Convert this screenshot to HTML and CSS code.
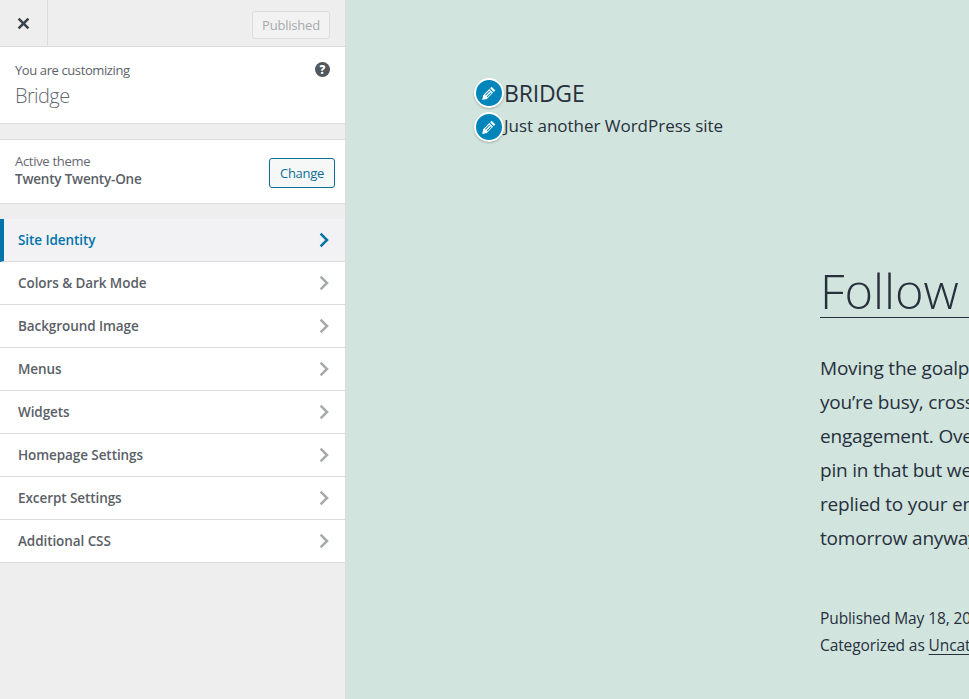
FILE: index.html
```html
<!DOCTYPE html>
<html lang="en">
<head>
<meta charset="utf-8">
<title>Customize: Bridge</title>
<link rel="stylesheet" href="styles.css">
</head>
<body>
<div class="app">
  <aside class="sidebar">
    <header class="topbar">
      <div class="close">
        <svg width="13" height="13" viewBox="0 0 13 13"><path d="M1.6 1.6l9.8 9.8M11.4 1.6l-9.8 9.8" stroke="#3c434a" stroke-width="2.6" fill="none"/></svg>
      </div>
      <div class="published">Published</div>
    </header>
    <section class="info">
      <div>
        <div class="info-label">You are customizing</div>
        <div class="info-title">Bridge</div>
      </div>
      <svg class="help" width="15" height="15" viewBox="0 0 15 15"><circle cx="7.5" cy="7.5" r="7.5" fill="#50575e"/><text x="7.5" y="11.6" text-anchor="middle" class="help-mark">?</text></svg>
    </section>
    <section class="theme">
      <div>
        <div class="theme-label">Active theme</div>
        <div class="theme-name">Twenty Twenty-One</div>
      </div>
      <div class="change">Change</div>
    </section>
    <nav class="menu">
      <div class="item active">Site Identity<svg class="chev" width="10" height="16" viewBox="0 0 10 16"><path d="M1.6 1.6L8 8l-6.4 6.4" fill="none" stroke-width="2.5"/></svg></div>
      <div class="item">Colors &amp; Dark Mode<svg class="chev" width="10" height="16" viewBox="0 0 10 16"><path d="M1.6 1.6L8 8l-6.4 6.4" fill="none" stroke-width="2.5"/></svg></div>
      <div class="item">Background Image<svg class="chev" width="10" height="16" viewBox="0 0 10 16"><path d="M1.6 1.6L8 8l-6.4 6.4" fill="none" stroke-width="2.5"/></svg></div>
      <div class="item">Menus<svg class="chev" width="10" height="16" viewBox="0 0 10 16"><path d="M1.6 1.6L8 8l-6.4 6.4" fill="none" stroke-width="2.5"/></svg></div>
      <div class="item">Widgets<svg class="chev" width="10" height="16" viewBox="0 0 10 16"><path d="M1.6 1.6L8 8l-6.4 6.4" fill="none" stroke-width="2.5"/></svg></div>
      <div class="item">Homepage Settings<svg class="chev" width="10" height="16" viewBox="0 0 10 16"><path d="M1.6 1.6L8 8l-6.4 6.4" fill="none" stroke-width="2.5"/></svg></div>
      <div class="item">Excerpt Settings<svg class="chev" width="10" height="16" viewBox="0 0 10 16"><path d="M1.6 1.6L8 8l-6.4 6.4" fill="none" stroke-width="2.5"/></svg></div>
      <div class="item">Additional CSS<svg class="chev" width="10" height="16" viewBox="0 0 10 16"><path d="M1.6 1.6L8 8l-6.4 6.4" fill="none" stroke-width="2.5"/></svg></div>
    </nav>
  </aside>
  <main class="preview">
    <div class="branding">
      <div class="site-row">
        <span class="pencil"><svg width="16" height="16" viewBox="0 0 16 16"><path d="M10.6 1.7l3.7 3.7-1.5 1.5-3.7-3.7z" fill="#fff"/><path fill-rule="evenodd" d="M8.3 4l3.7 3.7-6.2 6.2-4.6 1 1-4.7zM8.3 5.6L4 9.9l.7.7 4.3-4.3zM10 7.3l-4.3 4.3.7.7 4.3-4.3z" fill="#fff"/></svg></span>
        <span class="site-title">BRIDGE</span>
      </div>
      <div class="site-row tagline-row">
        <span class="pencil"><svg width="16" height="16" viewBox="0 0 16 16"><path d="M10.6 1.7l3.7 3.7-1.5 1.5-3.7-3.7z" fill="#fff"/><path fill-rule="evenodd" d="M8.3 4l3.7 3.7-6.2 6.2-4.6 1 1-4.7zM8.3 5.6L4 9.9l.7.7 4.3-4.3zM10 7.3l-4.3 4.3.7.7 4.3-4.3z" fill="#fff"/></svg></span>
        <span class="tagline">Just another WordPress site</span>
      </div>
    </div>
    <article class="post">
      <h1 class="post-title">Follow</h1>
      <div class="post-body">
        <div>Moving the goalposts</div>
        <div>you’re busy, cross-pollination</div>
        <div>engagement. Overcome</div>
        <div>pin in that but we</div>
        <div>replied to your email</div>
        <div>tomorrow anyway</div>
      </div>
      <div class="post-meta">
        <div>Published May 18, 2021</div>
        <div>Categorized as <span class="link">Uncategorized</span></div>
      </div>
    </article>
  </main>
</div>
</body>
</html>
```
FILE: styles.css
```css
* { box-sizing: border-box; }
html, body { margin: 0; height: 100%; overflow: hidden; }
body { font-family: "Open Sans", "Noto Sans", sans-serif; color: #50575e; }
.app { display: flex; height: 699px; width: 969px; }

.sidebar { width: 346px; flex: none; background: #eeeeee; border-right: 1px solid #dcdcde; }
.topbar { height: 47px; display: flex; justify-content: space-between; align-items: flex-start; padding-right: 15px; border-bottom: 1px solid #dcdcde; }
.close { width: 48px; height: 46px; display: flex; align-items: center; justify-content: center; border-right: 1px solid #dcdcde; }
.published { width: 78px; height: 28px; margin-top: 11px; display: flex; align-items: center; justify-content: center; font-size: 13px; letter-spacing: -0.2px; color: #a7aaad; background: #f2f2f2; border: 1px solid #dcdcde; border-radius: 3px; }

.info { height: 77px; background: #fff; border-bottom: 1px solid #dcdcde; padding: 14px 15px 0; display: flex; justify-content: space-between; align-items: flex-start; }
.info-label { font-size: 13px; line-height: 18px; letter-spacing: -0.4px; color: #5c6269; }
.info-title { font-size: 20px; line-height: 28px; margin-top: 3px; font-weight: 300; letter-spacing: -0.6px; color: #646970; }
.help { margin-top: 1px; }
.help-mark { font-size: 11.5px; font-weight: 800; fill: #fff; font-family: "Open Sans", sans-serif; }

.theme { margin-top: 15px; height: 65px; background: #fff; border-top: 1px solid #dcdcde; border-bottom: 1px solid #dcdcde; padding: 0 10px 0 15px; display: flex; justify-content: space-between; align-items: center; }
.theme > div:first-child { margin-top: -4px; }
.theme-name { font-size: 13.5px; line-height: 18px; font-weight: 600; letter-spacing: -0.2px; color: #5a6067; }
.theme-label { font-size: 13px; line-height: 18px; letter-spacing: -0.3px; color: #646970; }
.change { width: 66px; height: 30px; margin-top: 2px; display: flex; align-items: center; justify-content: center; font-size: 13px; letter-spacing: -0.3px; color: #0e6f95; background: #f6f7f7; border: 1px solid #0e6f95; border-radius: 3px; }

.menu { margin-top: 15px; }
.item { height: 43px; display: flex; justify-content: space-between; align-items: center; padding: 0 16px 0 18px; font-size: 13.5px; font-weight: 600; letter-spacing: -0.08px; color: #5a6067; background: #fff; border-bottom: 1px solid #dcdcde; }
.item .chev { stroke: #a7aaad; }
.item.active { color: #0073aa; background: #f2f2f4; border-left: 4px solid #0073aa; padding-left: 14px; }
.item.active .chev { stroke: #0073aa; }

.preview { flex: 1; min-width: 0; background: #d1e4dd; overflow: hidden; color: #28303d; padding: 78px 0 0 128px; }
.branding { display: flex; flex-direction: column; }
.site-row { display: flex; align-items: center; height: 30px; }
.tagline-row { margin-top: 4px; }
.pencil { width: 30px; height: 30px; flex: none; border-radius: 50%; background: #0085ba; border: 2px solid #fff; box-shadow: 0 1px 2px rgba(0,0,0,.25); display: flex; align-items: center; justify-content: center; }
.site-title { font-size: 23px; letter-spacing: -0.2px; }
.tagline { font-size: 17px; letter-spacing: -0.02px; margin-bottom: 4px; }

.post { margin: 121px 0 0 346px; width: 500px; }
.post-title { margin: 0; font-size: 48.7px; line-height: 54px; font-weight: 300; white-space: nowrap; border-bottom: 1px solid #28303d; height: 55px; }
.post-body { margin-top: 33px; font-size: 19px; line-height: 34px; letter-spacing: -0.2px; white-space: nowrap; }
.post-meta { margin-top: 50px; font-size: 15.5px; line-height: 27px; letter-spacing: -0.1px; white-space: nowrap; }
.link { text-decoration: underline; text-underline-offset: 3px; }
```
